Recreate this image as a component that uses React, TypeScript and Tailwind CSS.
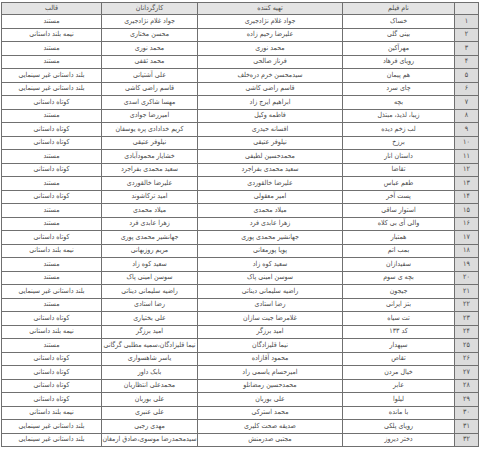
import React from "react";

const rows: [string, string, string, string][] = [
  ["خساک", "جواد غلام نژادجیری", "جواد غلام نژادجیری", "مستند"],
  ["بینی گلی", "علیرضا رحیم زاده", "محسن مختاری", "نیمه بلند داستانی"],
  ["مهرآکین", "محمد نوری", "محمد نوری", "مستند"],
  ["رویای فرهاد", "فرناز صالحی", "محمد ثقفی", "مستند"],
  ["هم پیمان", "سیدمحسن خرم دره‌خلف", "علی آشتیانی", "بلند داستانی غیر سینمایی"],
  ["چای سرد", "قاسم راضی کاشی", "قاسم راضی کاشی", "بلند داستانی غیر سینمایی"],
  ["بچه", "ابراهیم ایرج زاد", "مهسا شاکری اسدی", "کوتاه داستانی"],
  ["زیبا، لذیذ، مبتذل", "فاطمه وکیل", "امیررضا جوادی", "مستند"],
  ["لب زخم دیده", "افسانه حیدری", "کریم خدادادی پره یوسفان", "کوتاه داستانی"],
  ["برزخ", "نیلوفر عتیقی", "نیلوفر عتیقی", "کوتاه داستانی"],
  ["داستان انار", "محمدحسین لطیفی", "خشایار محمودآبادی", "مستند"],
  ["تقاضا", "سعید محمدی بفراجرد", "سعید محمدی بفراجرد", "کوتاه داستانی"],
  ["طعم عباس", "علیرضا خالقوردی", "علیرضا خالقوردی", "مستند"],
  ["پست آخر", "امیر معقولی", "امید ترکاشوند", "کوتاه داستانی"],
  ["استوار ساقی", "میلاد محمدی", "میلاد محمدی", "مستند"],
  ["والی آی بی کلاه", "زهرا عابدی فرد", "زهرا عابدی فرد", "مستند"],
  ["همتبار", "جهانشیر محمدی پوری", "جهانشیر محمدی پوری", "کوتاه داستانی"],
  ["بمب اتم", "پویا پورمعانی", "مریم روزبهانی", "نیمه بلند داستانی"],
  ["سفیدازان", "سعید کوه زاد", "سعید کوه زاد", "مستند"],
  ["بچه ی سوم", "سوسن امینی پاک", "سوسن امینی پاک", "مستند"],
  ["جیجون", "راضیه سلیمانی دیناتی", "راضیه سلیمانی دیناتی", "بلند داستانی غیر سینمایی"],
  ["بتز ایرانی", "رضا استادی", "رضا استادی", "مستند"],
  ["تت سیاه", "غلامرضا جیت سازان", "علی بختیاری", "کوتاه داستانی"],
  ["کد ۱۳۳", "امید برزگر", "امید برزگر", "نیمه بلند داستانی"],
  ["سپهدار", "نیما قلیزادگان", "نیما قلیزادگان،سمیه مطلبی گرگانی", "مستند"],
  ["تقاص", "محمود آقازاده", "یاسر شاهسواری", "کوتاه داستانی"],
  ["خیال مردن", "امیرحسام یاسمی راد", "بابک داور", "کوتاه داستانی"],
  ["عابر", "محمدحسین رمضانلو", "محمدعلی انتظاریان", "کوتاه داستانی"],
  ["لیلوا", "علی بوربان", "علی بوربان", "کوتاه داستانی"],
  ["با مانده", "محمد استرکی", "علی عنبری", "نیمه بلند داستانی"],
  ["رویای پلکی", "صدیقه صحت کلیری", "مهدی رجبی", "بلند داستانی غیر سینمایی"],
  ["دختر دیروز", "مجتبی صدرمنش", "سیدمحمدرضا موسوی،صادق ارمغان", "بلند داستانی غیر سینمایی"],
];

const toFa = (n: number) =>
  String(n).replace(/[0-9]/g, (d) => "۰۱۲۳۴۵۶۷۸۹"[Number(d)]);

export default function App() {
  return (
    <div className="w-[480px] h-[449px] bg-white pt-[2px] pl-[1px]">
      <table
        dir="rtl"
        className="table-fixed border-collapse w-[477px] text-[7px] leading-none text-[#4a4a4a] font-stretch-condensed font-['DejaVu_Sans',sans-serif]"
      >
        <colgroup>
          <col className="w-[24px]" />
          <col className="w-[112px]" />
          <col className="w-[145px]" />
          <col className="w-[96px]" />
          <col className="w-[100px]" />
        </colgroup>
        <thead>
          <tr className="h-[12px] bg-[#e4e4e4]">
            <th className="border border-[#707070] font-normal"></th>
            <th className="border border-[#707070] font-normal">نام فیلم</th>
            <th className="border border-[#707070] font-normal">تهیه کننده</th>
            <th className="border border-[#707070] font-normal">کارگردانان</th>
            <th className="border border-[#707070] font-normal">قالب</th>
          </tr>
        </thead>
        <tbody>
          {rows.map((r, i) => (
            <tr key={i} className="h-[13.5px]">
              <td className="border border-[#707070] bg-[#dcdcdc] text-center">{toFa(i + 1)}</td>
              <td className="border border-[#707070] text-center whitespace-nowrap">{r[0]}</td>
              <td className="border border-[#707070] text-center whitespace-nowrap">{r[1]}</td>
              <td className="border border-[#707070] text-center whitespace-nowrap">{r[2]}</td>
              <td className="border border-[#707070] text-center whitespace-nowrap">{r[3]}</td>
            </tr>
          ))}
        </tbody>
      </table>
    </div>
  );
}
